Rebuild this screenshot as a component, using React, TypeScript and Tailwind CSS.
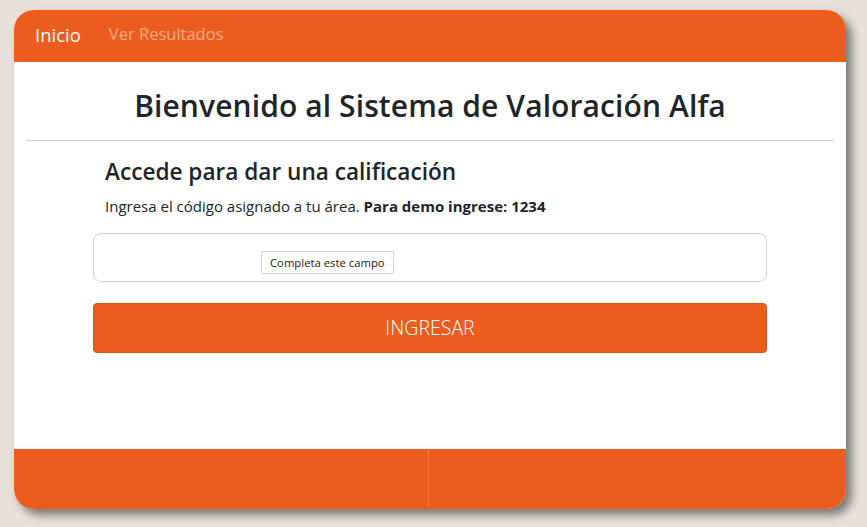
import React from 'react'

export default function App() {
  return (
    <div
      className="w-[867px] h-[527px] bg-[#e6e0d8] pt-[10px] pl-[14px]"
      style={{ fontFamily: '"Open Sans", "Noto Sans", sans-serif' }}
    >
      <div className="w-[832px] h-[499px] rounded-[20px] overflow-hidden bg-white flex flex-col shadow-[6px_6px_8px_rgba(0,0,0,0.45)]">
        {/* Navbar */}
        <nav className="h-[52px] bg-[#eb5c1e] flex items-center pl-[21px] gap-[28px] pb-[3px]">
          <span className="text-white text-[18.5px]">Inicio</span>
          <span className="text-[#f7aa86] text-[16.5px]">Ver Resultados</span>
        </nav>

        {/* Content */}
        <main className="flex-1 px-[12px]">
          <h1 className="text-center text-[#212529] text-[30px] font-semibold pt-[26px] pb-[16px] leading-[36px] tracking-[0.1px]">
            Bienvenido al Sistema de Valoración Alfa
          </h1>
          <hr className="border-[#d0d0d0]" />
          <div className="px-[67px] pt-[17px]">
            <h2 className="pl-[12px] text-[#212529] text-[22.6px] font-semibold leading-[28px]">
              Accede para dar una calificación
            </h2>
            <p className="pl-[12px] mt-[10px] text-[#212529] text-[15px] leading-[20px]">
              Ingresa el código asignado a tu área. <b className="font-bold">Para demo ingrese: 1234</b>
            </p>
            <div className="relative mt-[17px] h-[49px] border border-[#cfcfcf] rounded-[8px]">
              <div className="absolute left-[167px] top-[17px] border border-[#d6d6d6] bg-white px-[8px] py-[3px] text-[11.3px] leading-[15px] text-[#222]">
                Completa este campo
              </div>
            </div>
            <button className="mt-[21px] w-full h-[50px] rounded-[4px] bg-[#eb5c1e] border border-[#d9521a] text-white text-[19.5px] font-light">
              INGRESAR
            </button>
          </div>
        </main>

        {/* Footer */}
        <footer className="h-[60px] bg-[#eb5c1e] flex">
          <div className="w-[415px] border-r border-[#f07a45]" />
          <div className="flex-1" />
        </footer>
      </div>
    </div>
  )
}
